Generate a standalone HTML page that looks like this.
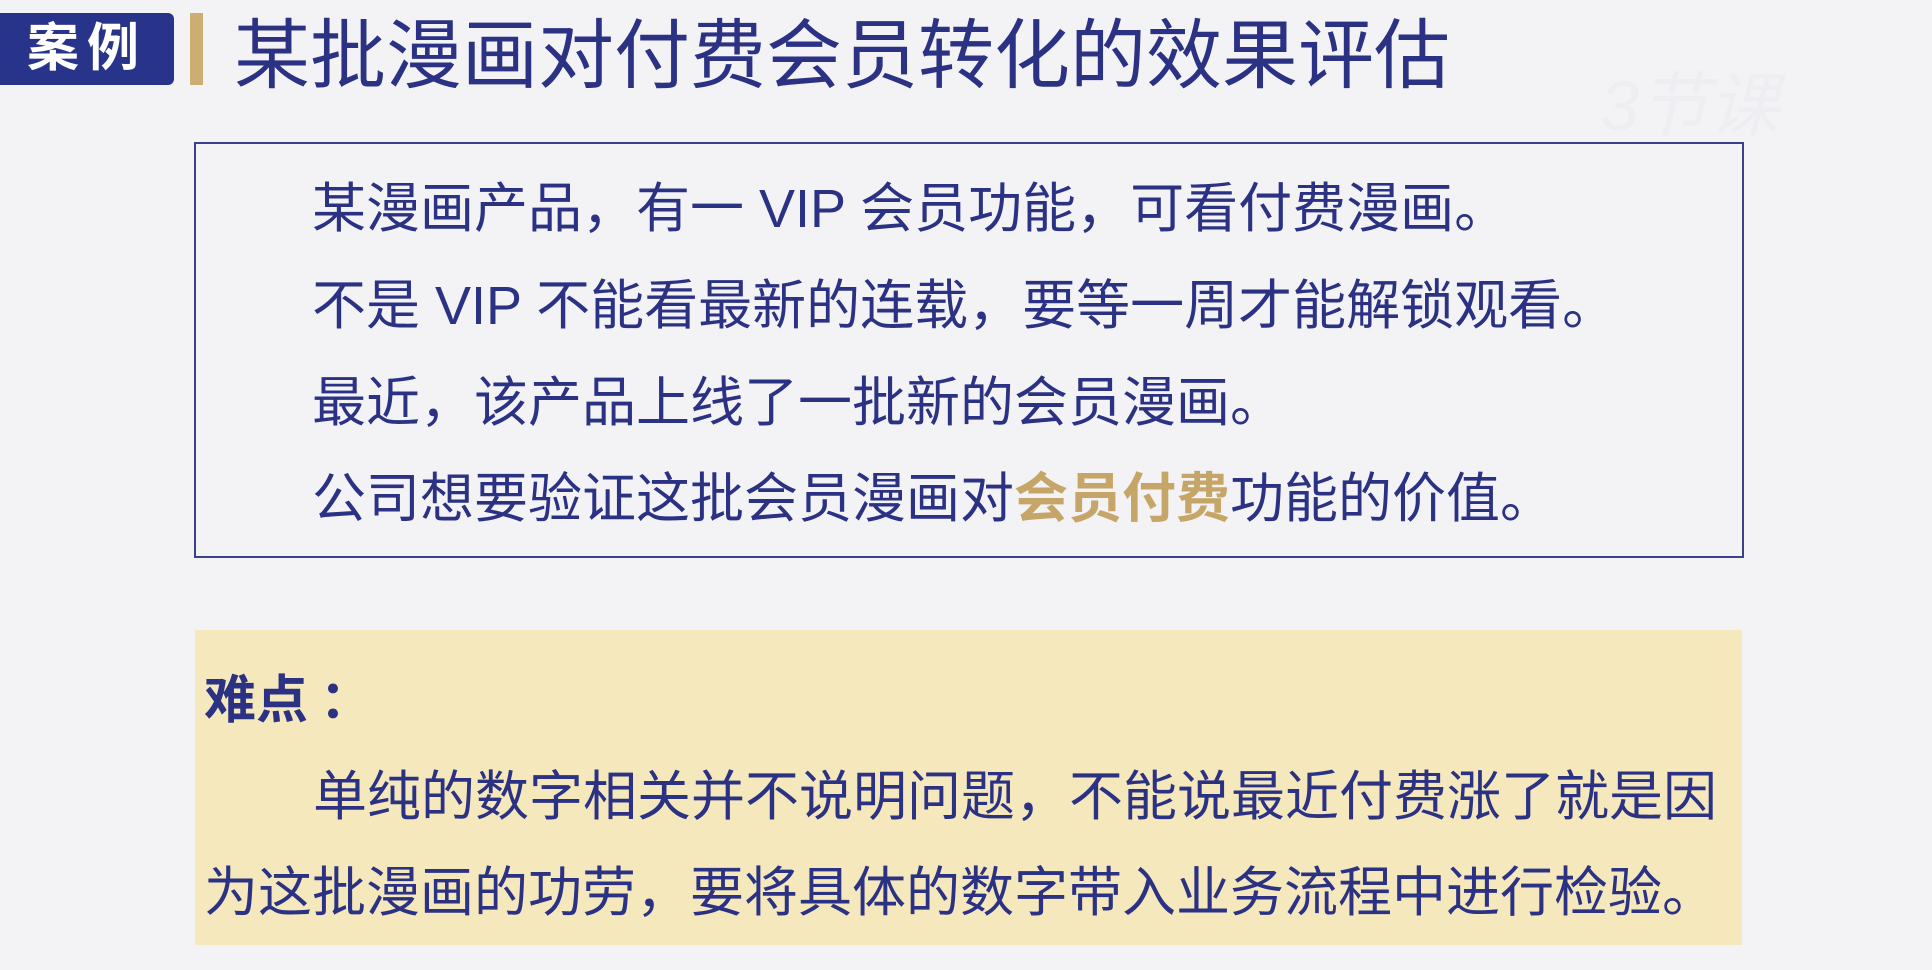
<!DOCTYPE html>
<html><head><meta charset="utf-8"><style>
html,body{margin:0;padding:0;}
body{width:1932px;height:970px;background:#f3f3f6;position:relative;overflow:hidden;font-family:"Liberation Sans","Noto Sans CJK SC",sans-serif;color:#2b3283;}
.badge{position:absolute;left:0;top:13px;width:174px;height:72px;background:#28348a;border-radius:0 6px 6px 0;color:#fff;font-weight:bold;font-size:52px;line-height:72px;text-align:center;letter-spacing:8px;}
.bar{position:absolute;left:190px;top:13px;width:13px;height:72px;background:#cdae72;}
.title{position:absolute;left:234px;top:12px;font-size:76px;line-height:90px;white-space:nowrap;color:#2b3283;}
.box{position:absolute;left:194px;top:142px;width:1546px;height:412px;border:2px solid #3a4189;box-sizing:content-box;}
.l{position:absolute;left:312px;font-size:54px;line-height:60px;white-space:nowrap;}
.gold{color:#c6a668;font-weight:bold;}
.yb{position:absolute;left:195px;top:630px;width:1547px;height:315px;background:#f5e8bc;}
.y{position:absolute;font-size:54px;line-height:60px;white-space:nowrap;}
.wm{position:absolute;left:1600px;top:50px;font-size:70px;color:#eeeef2;font-style:italic;}
</style></head><body>
<div class="badge">案例</div>
<div class="bar"></div>
<div class="title">某批漫画对付费会员转化的效果评估</div>
<div class="wm">3节课</div>
<div class="box"></div>
<div class="l" style="top:179px">某漫画产品，有一 VIP 会员功能，可看付费漫画。</div>
<div class="l" style="top:276px">不是 VIP 不能看最新的连载，要等一周才能解锁观看。</div>
<div class="l" style="top:373px">最近，该产品上线了一批新的会员漫画。</div>
<div class="l" style="top:469px">公司想要验证这批会员漫画对<span class="gold">会员付费</span>功能的价值。</div>
<div class="yb"></div>
<div class="y" style="left:204px;top:671px;font-weight:bold;font-size:52px;">难点<span style="margin-left:12px">：</span></div>
<div class="y" style="left:313px;top:767px">单纯的数字相关并不说明问题，不能说最近付费涨了就是因</div>
<div class="y" style="left:204px;top:863px">为这批漫画的功劳，要将具体的数字带入业务流程中进行检验。</div>
</body></html>
